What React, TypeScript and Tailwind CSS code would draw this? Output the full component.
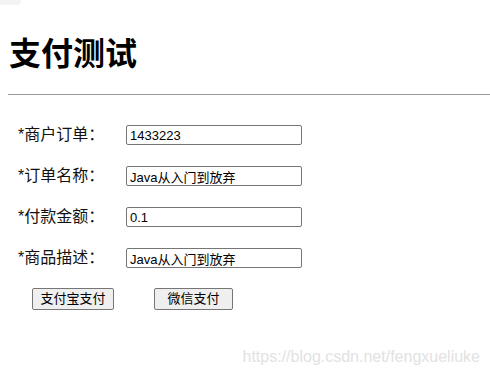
import React from 'react';

const fields = [
  { label: '*商户订单：', value: '1433223' },
  { label: '*订单名称：', value: 'Java从入门到放弃' },
  { label: '*付款金额：', value: '0.1' },
  { label: '*商品描述：', value: 'Java从入门到放弃' },
];

export default function App() {
  return (
    <div className="relative w-[490px] h-[382px] bg-white text-black overflow-hidden font-['Liberation_Sans','Noto_Sans_CJK_SC',sans-serif]">
      <div className="absolute left-0 top-0 w-[21px] h-[5px] rounded-br-[4px] bg-[#f3f3f3]" />

      <div className="pl-[8px] pt-[35px]">
        <h1 className="pl-[1px] text-[32px] font-bold leading-[38px]">支付测试</h1>
        <div className="mt-[21px] h-px bg-[#999999]" />
      </div>

      <form className="pl-[18px] pt-[30px] flex flex-col gap-[21px]" onSubmit={(e) => e.preventDefault()}>
        {fields.map((f) => (
          <div key={f.label} className="flex items-center h-[20px]">
            <span className="w-[108px] text-[16px] leading-[20px] text-[#111]">{f.label}</span>
            <input
              readOnly
              value={f.value}
              className="w-[176px] h-[20px] border border-[#767676] rounded-[2px] px-[3px] text-[13px] leading-[18px] outline-none"
            />
          </div>
        ))}
        <div className="flex items-center gap-[40px] pl-[14px] -mt-[1px]">
          <button type="button" className="w-[82px] h-[22px] border border-[#767676] rounded-[2px] bg-[#efefef] text-[13px] leading-[20px]">
            支付宝支付
          </button>
          <button type="button" className="w-[79px] h-[22px] border border-[#767676] rounded-[2px] bg-[#efefef] text-[13px] leading-[20px]">
            微信支付
          </button>
        </div>
      </form>

      <div className="absolute right-[10px] top-[347px] text-[16px] leading-[20px] text-[#e2e2e2]">
        https://blog.csdn.net/fengxueliuke
      </div>
    </div>
  );
}
